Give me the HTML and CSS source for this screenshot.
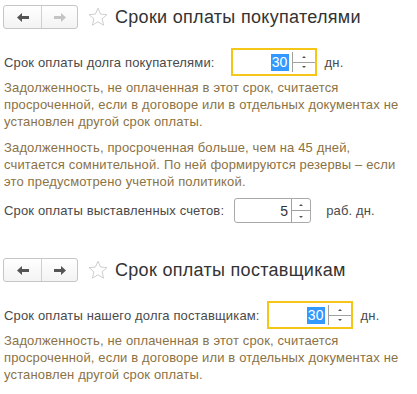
FILE: index.html
```html
<!DOCTYPE html>
<html lang="ru">
<head>
  <meta charset="UTF-8">
  <title>Сроки оплаты</title>
  <link rel="stylesheet" href="styles.css">
</head>
<body>
  <section class="panel">
    <div class="panel-head">
      <div class="nav">
        <span class="nav-btn">
          <svg width="12" height="9" viewBox="0 0 12 9"><path d="M0 4.5 L5 0 V3 H12 V6 H5 V9 Z"/></svg>
        </span>
        <span class="nav-btn is-off">
          <svg width="12" height="9" viewBox="0 0 12 9"><path d="M12 4.5 L7 0 V3 H0 V6 H7 V9 Z"/></svg>
        </span>
      </div>
      <svg class="star" width="20" height="20" viewBox="0 0 20 20"><path d="M10 1.2 L12.6 7.1 L19 7.6 L14.1 11.8 L15.6 18.2 L10 14.8 L4.4 18.2 L5.9 11.8 L1 7.6 L7.4 7.1 Z"/></svg>
      <h1>Сроки оплаты покупателями</h1>
    </div>

    <div class="field field-first">
      <label>Срок оплаты долга покупателями:</label>
      <div class="spin is-focus">
        <span class="spin-value"><span class="sel">30</span></span>
        <span class="spin-arrows"><i class="up"></i><i class="down"></i></span>
      </div>
      <span class="unit">дн.</span>
    </div>
    <p class="note">Задолженность, не оплаченная в этот срок, считается просроченной, если в договоре или в отдельных документах не установлен другой срок оплаты.</p>
    <p class="note">Задолженность, просроченная больше, чем на 45 дней, считается сомнительной. По ней формируются резервы – если это предусмотрено учетной политикой.</p>

    <div class="field field-days">
      <label>Срок оплаты выставленных счетов:</label>
      <div class="spin spin-small">
        <span class="spin-value">5</span>
        <span class="spin-arrows"><i class="up"></i><i class="down"></i></span>
      </div>
      <span class="unit">раб. дн.</span>
    </div>
  </section>

  <section class="panel">
    <div class="panel-head">
      <div class="nav">
        <span class="nav-btn">
          <svg width="12" height="9" viewBox="0 0 12 9"><path d="M0 4.5 L5 0 V3 H12 V6 H5 V9 Z"/></svg>
        </span>
        <span class="nav-btn">
          <svg width="12" height="9" viewBox="0 0 12 9"><path d="M12 4.5 L7 0 V3 H0 V6 H7 V9 Z"/></svg>
        </span>
      </div>
      <svg class="star" width="20" height="20" viewBox="0 0 20 20"><path d="M10 1.2 L12.6 7.1 L19 7.6 L14.1 11.8 L15.6 18.2 L10 14.8 L4.4 18.2 L5.9 11.8 L1 7.6 L7.4 7.1 Z"/></svg>
      <h1>Срок оплаты поставщикам</h1>
    </div>

    <div class="field">
      <label>Срок оплаты нашего долга поставщикам:</label>
      <div class="spin is-focus">
        <span class="spin-value"><span class="sel">30</span></span>
        <span class="spin-arrows"><i class="up"></i><i class="down"></i></span>
      </div>
      <span class="unit">дн.</span>
    </div>
    <p class="note">Задолженность, не оплаченная в этот срок, считается просроченной, если в договоре или в отдельных документах не установлен другой срок оплаты.</p>
  </section>
</body>
</html>
```

FILE: styles.css
```css
body {
  margin: 0;
  padding: 0 4px;
  font-family: "Liberation Sans", Arial, sans-serif;
  font-size: 13px;
  letter-spacing: .15px;
  color: #4a4a4a;
  background: #fff;
}

.panel {
  padding-top: 5px;
}

.panel + .panel {
  margin-top: 30px;
}

.panel-head {
  display: flex;
  align-items: center;
  margin-left: -1px;
}

.panel-head h1 {
  margin: 0 0 0 7px;
  font-size: 18px;
  font-weight: normal;
  letter-spacing: .3px;
  color: #333;
}

.nav {
  display: flex;
  height: 22px;
  border: 1px solid #c6c6c6;
  border-radius: 3px;
  background: linear-gradient(#fff, #f3f3f3);
}

.nav-btn {
  display: flex;
  align-items: center;
  justify-content: center;
  width: 37px;
  fill: #555;
}

.nav-btn + .nav-btn {
  width: 35px;
  border-left: 1px solid #d0d0d0;
}

.nav-btn.is-off {
  fill: #c4c4c4;
}

.star {
  margin-left: 10px;
  fill: none;
  stroke: #cfcfcf;
  stroke-width: 1;
}

.field {
  display: flex;
  align-items: center;
  margin-top: 19px;
}

.field label {
  margin-right: 7px;
}

.field-first label {
  margin-right: 16px;
}

.field-days {
  margin-top: 8px;
}

.field-days label {
  margin-right: 10px;
}

.unit {
  margin-left: 8px;
}

.field-days .unit {
  margin-left: 15px;
}

.spin {
  display: flex;
  box-sizing: border-box;
  width: 86px;
  height: 28px;
  border: 2px solid #f5c518;
  background: #fff;
}

.spin-small {
  width: 77px;
  height: 25px;
  border: 1px solid #a9a9a9;
  border-radius: 3px;
}

.spin-value {
  flex: 1;
  display: flex;
  align-items: center;
  justify-content: flex-end;
  padding-right: 3px;
  font-size: 14px;
  color: #333;
}

.sel {
  padding: 0 1px;
  line-height: 17px;
  background: #3399ff;
  color: #fff;
}

.spin-arrows {
  display: flex;
  flex-direction: column;
  width: 22px;
  margin: 2px 0;
  border-left: 1px solid #a0a0a0;
}

.spin-small .spin-arrows {
  width: 18px;
  margin: 0;
}

.spin-arrows i {
  flex: 1;
  display: flex;
  align-items: center;
  justify-content: center;
}

.spin-arrows .up {
  border-bottom: 1px solid #a0a0a0;
}

.spin-arrows i::before {
  content: "";
  border-left: 2px solid transparent;
  border-right: 2px solid transparent;
}

.spin-arrows .up::before {
  border-bottom: 2px solid #555;
}

.spin-arrows .down::before {
  border-top: 2px solid #555;
}

.note {
  margin: 3px 0 0;
  line-height: 17px;
  color: #8b7245;
}

.note + .note {
  margin-top: 9px;
}
```
